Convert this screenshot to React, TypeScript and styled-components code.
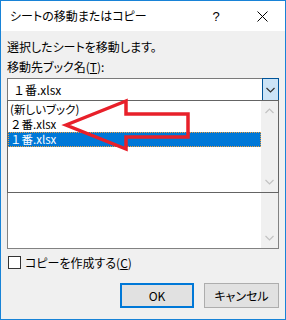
import React from 'react'
import styled, { createGlobalStyle } from 'styled-components'

const GlobalStyle = createGlobalStyle`
  html, body {
    margin: 0;
    padding: 0;
    background: #ffffff;
  }
  body {
    font-family: "Noto Sans CJK JP", "Noto Sans", sans-serif;
    font-size: 12px;
    color: #000000;
  }
`

const Chevron: React.FC<{ up?: boolean; color: string }> = ({ up, color }) => (
  <svg width="9" height="6" viewBox="0 0 9 6">
    <path
      d={up ? 'M0.5 5 L4.5 1 L8.5 5' : 'M0.5 1 L4.5 5 L8.5 1'}
      fill="none"
      stroke={color}
      strokeWidth="1.2"
    />
  </svg>
)

// full-width digit keeps its em width, like the original dialog font
const BookName: React.FC<{ name: string }> = ({ name }) => {
  const m = name.match(/^([０-９])(.*)$/)
  if (!m) return <>{name}</>
  return (
    <>
      <Digit>{m[1]}</Digit>
      {m[2]}
    </>
  )
}

export default function App() {
  const books = ['(新しいブック)', '２番.xlsx', '１番.xlsx']
  const selected = 2

  return (
    <>
      <GlobalStyle />
      <Dialog>
        <TitleBar>
          <Title>シートの移動またはコピー</Title>
          <CaptionButton>?</CaptionButton>
          <CaptionButton>
            <svg width="11" height="11" viewBox="0 0 11 11">
              <path d="M0.5 0.5 L10.5 10.5 M10.5 0.5 L0.5 10.5" stroke="#000" strokeWidth="1" />
            </svg>
          </CaptionButton>
        </TitleBar>
        <Body>
          <Message>選択したシートを移動します。</Message>
          <FieldLabel>
            移動先ブック名(<u>T</u>):
          </FieldLabel>
          <ComboWrap>
            <Combo>
              <ComboText>
                <BookName name="１番.xlsx" />
              </ComboText>
              <DropButton>
                <Chevron color="#333333" />
              </DropButton>
            </Combo>
            <Popup>
              <Items>
                {books.map((b, i) => (
                  <Item key={b} active={i === selected}>
                    <BookName name={b} />
                  </Item>
                ))}
              </Items>
              <ScrollBar>
                <ScrollArrow>
                  <Chevron up color="#c2c2c2" />
                </ScrollArrow>
                <ScrollArrow>
                  <Chevron color="#c2c2c2" />
                </ScrollArrow>
              </ScrollBar>
            </Popup>
          </ComboWrap>
          <SheetList>
            <Items />
            <ScrollBar>
              <ScrollArrow>
                <Chevron up color="#c2c2c2" />
              </ScrollArrow>
              <ScrollArrow>
                <Chevron color="#c2c2c2" />
              </ScrollArrow>
            </ScrollBar>
          </SheetList>
          <CheckRow>
            <CheckBox />
            <span>
              コピーを作成する(<u>C</u>)
            </span>
          </CheckRow>
          <ButtonRow>
            <Button primary>OK</Button>
            <Button>キャンセル</Button>
          </ButtonRow>
        </Body>
        <Annotation width="286" height="320" viewBox="0 0 286 320">
          <polygon
            points="66,125 126,101 126,114 188,114 188,137 126,137 126,149"
            fill="none"
            stroke="#e8202a"
            strokeWidth="3.5"
          />
        </Annotation>
      </Dialog>
    </>
  )
}

const Dialog = styled.div`
  position: relative;
  width: 286px;
  height: 320px;
  box-sizing: border-box;
  border: 1px solid #1883d7;
  background: #f0f0f0;
  display: flex;
  flex-direction: column;
  font-feature-settings: "palt";
`

const Digit = styled.span`
  font-feature-settings: normal;
`

const TitleBar = styled.div`
  height: 30px;
  background: #ffffff;
  display: flex;
  align-items: center;
  padding-left: 9px;
`

const Title = styled.div`
  flex: 1;
  font-size: 12px;
  line-height: 16px;
`

const CaptionButton = styled.div`
  width: 46px;
  height: 30px;
  display: flex;
  align-items: center;
  justify-content: center;
  font-family: "Liberation Sans", sans-serif;
  font-size: 13px;
`

const Body = styled.div`
  flex: 1;
  display: flex;
  flex-direction: column;
  padding: 0 6px;
`

const Message = styled.div`
  margin-top: 8px;
  line-height: 16px;
`

const FieldLabel = styled.div`
  margin-top: 4px;
  line-height: 16px;
`

const ComboWrap = styled.div`
  position: relative;
  margin-top: 3px;
  z-index: 2;
`

const Combo = styled.div`
  height: 23px;
  box-sizing: border-box;
  border: 1px solid #7a7a7a;
  background: #ffffff;
  display: flex;
  align-items: stretch;
`

const ComboText = styled.div`
  flex: 1;
  padding-left: 5px;
  line-height: 21px;
`

const DropButton = styled.div`
  width: 17px;
  margin: -1px -1px -1px 0;
  box-sizing: border-box;
  border: 1px solid #005499;
  background: #cce4f7;
  display: flex;
  align-items: center;
  justify-content: center;
`

const Popup = styled.div`
  position: absolute;
  left: 0;
  right: 0;
  top: 22px;
  height: 93px;
  box-sizing: border-box;
  border: 1px solid #646464;
  background: #ffffff;
  display: flex;
`

const Items = styled.div`
  flex: 1;
  padding-top: 1px;
`

const Item = styled.div<{ active?: boolean }>`
  height: 15px;
  line-height: 13px;
  font-size: 11.5px;
  overflow: hidden;
  box-sizing: border-box;
  padding-left: 1px;
  white-space: nowrap;
  color: ${({ active }) => (active ? '#ffffff' : '#000000')};
  background: ${({ active }) => (active ? '#0078d7' : 'transparent')};
  border: 1px dotted ${({ active }) => (active ? '#f0a040' : 'transparent')};
`

const ScrollBar = styled.div`
  width: 17px;
  background: #f0f0f0;
  display: flex;
  flex-direction: column;
  justify-content: space-between;
`

const ScrollArrow = styled.div`
  height: 20px;
  display: flex;
  align-items: center;
  justify-content: center;
`

const SheetList = styled.div`
  margin-top: 10px;
  height: 138px;
  box-sizing: border-box;
  border: 1px solid #828282;
  background: #ffffff;
  display: flex;
`

const CheckRow = styled.div`
  margin-top: 5px;
  height: 16px;
  display: flex;
  align-items: center;
  gap: 4px;
  padding-left: 1px;
`

const CheckBox = styled.div`
  width: 13px;
  height: 13px;
  box-sizing: border-box;
  border: 1px solid #333333;
  background: #ffffff;
`

const ButtonRow = styled.div`
  margin-top: 13px;
  display: flex;
  justify-content: flex-end;
  gap: 10px;
`

const Button = styled.div<{ primary?: boolean }>`
  width: ${({ primary }) => (primary ? '74px' : '75px')};
  height: 25px;
  box-sizing: border-box;
  border: ${({ primary }) => (primary ? '2px solid #0078d7' : '1px solid #adadad')};
  background: #e1e1e1;
  display: flex;
  align-items: center;
  justify-content: center;
`

const Annotation = styled.svg`
  position: absolute;
  left: -1px;
  top: -1px;
  pointer-events: none;
  z-index: 3;
`
